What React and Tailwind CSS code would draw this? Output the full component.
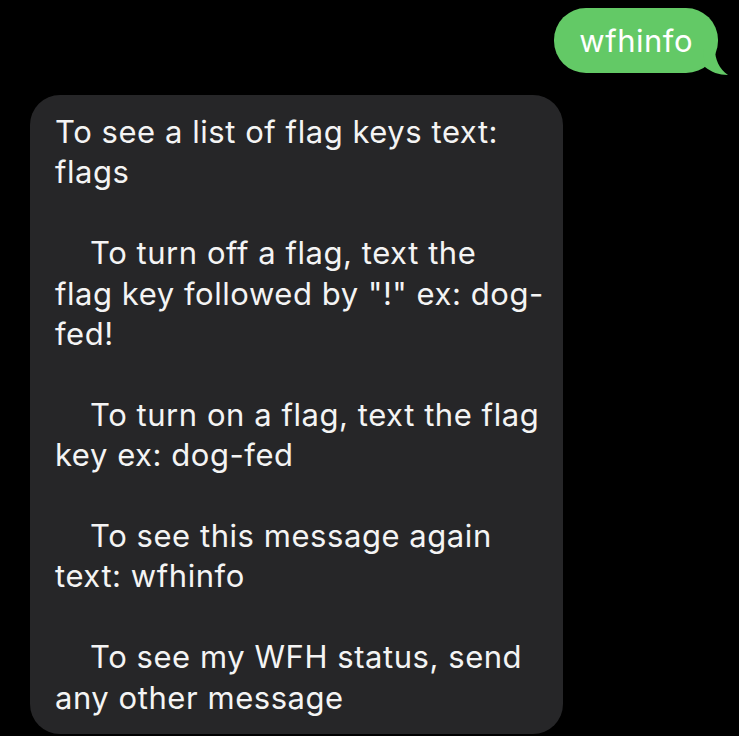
export default function App() {
  const lines = [
    { t: 'To see a list of flag keys text:' },
    { t: 'flags' },
    { t: '' },
    { t: 'To turn off a flag, text the', indent: true },
    { t: 'flag key followed by "!" ex: dog-' },
    { t: 'fed!' },
    { t: '' },
    { t: 'To turn on a flag, text the flag', indent: true },
    { t: 'key ex: dog-fed' },
    { t: '' },
    { t: 'To see this message again', indent: true },
    { t: 'text: wfhinfo' },
    { t: '' },
    { t: 'To see my WFH status, send', indent: true },
    { t: 'any other message' },
  ];

  return (
    <div className="min-h-[736px] w-[739px] bg-black overflow-hidden font-['Inter','Noto_Sans',sans-serif] text-white">
      {/* outgoing bubble */}
      <div className="flex justify-end pt-[8px] pr-[21px]">
        <div className="relative h-[65px] rounded-[32px] bg-[#63c966] px-[25px] flex items-center text-[31px] tracking-[0.5px] leading-none">
          wfhinfo
          <svg className="absolute -right-[11px] bottom-[-2px]" width="26" height="26" viewBox="0 0 26 26">
            <path d="M0 0 L12 0 C12 10 16 20 25 26 C16 26 8 23 2 18 Z" fill="#63c966" />
          </svg>
        </div>
      </div>

      {/* incoming bubble */}
      <div className="mt-[22px] ml-[30px] w-[533px] rounded-[30px] bg-[#262628] pt-[17px] pb-[16px] px-[25px] text-[31px] tracking-[0.55px] leading-[40.4px] text-[#f4f4f4]">
        {lines.map((l, i) => (
          <div key={i} className={`whitespace-pre ${l.indent ? 'pl-[35px]' : ''}`}>
            {l.t || '\u00a0'}
          </div>
        ))}
      </div>
    </div>
  );
}
